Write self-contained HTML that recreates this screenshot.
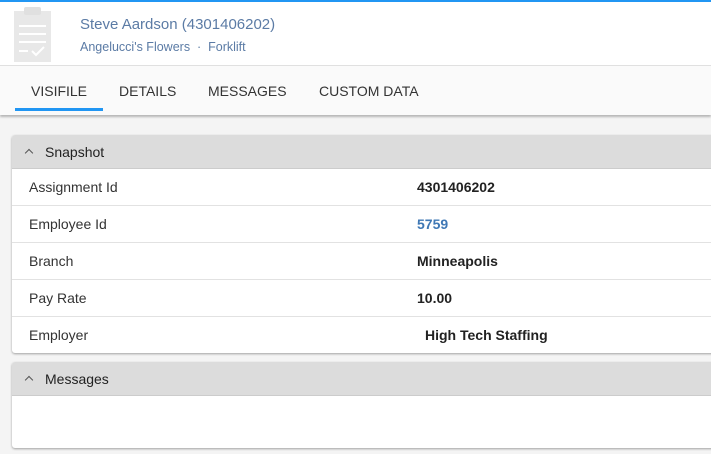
<!DOCTYPE html>
<html><head><style>
body{margin:0;width:711px;height:454px;overflow:hidden;background:#f4f4f4;font-family:"Liberation Sans",sans-serif;position:relative}
.top{position:absolute;left:0;top:0;width:711px;height:66px;background:#fff;border-top:2px solid #2196f3;box-sizing:border-box;border-bottom:1px solid #e0e0e0}
.name{position:absolute;left:80px;top:14px;font-size:15px;color:#5b7ba5}
.sub{position:absolute;left:80px;top:38px;font-size:12.5px;color:#5b7ba5}
.tabs{position:absolute;left:0;top:66px;width:711px;height:49px;background:#fafafa;box-shadow:0 2px 2px rgba(0,0,0,.25)}
.tab{position:absolute;top:17px;font-size:14px;color:#333}
.ul{position:absolute;left:15px;top:42px;width:88px;height:3px;background:#2196f3}
.card{position:absolute;left:12px;width:710px;background:#fff;border-radius:3px;box-shadow:0 1px 2px rgba(0,0,0,.35);overflow:hidden}
.hd{height:33px;background:#dcdcdc;border-bottom:1px solid #ccc;font-size:14px;color:#222;line-height:35px;padding-left:33px;position:relative}
.hd:before{content:"";position:absolute;left:14px;top:15px;width:5px;height:5px;border-left:1.5px solid #555;border-top:1.5px solid #555;transform:rotate(45deg)}
.row{height:36px;border-bottom:1px solid #e2e2e2;position:relative;font-size:14px;color:#333;line-height:36px}
.row:first-of-type{height:37px}
.row:last-child{border-bottom:none}
.row span{position:absolute;left:17px}
.row b{position:absolute;left:405px;font-weight:bold;color:#222;font-size:14px}
</style></head><body>
<div class="top">
<svg style="position:absolute;left:14px;top:5px" width="37" height="55" viewBox="0 0 37 55"><rect x="0" y="4" width="37" height="51" fill="#e8e8e8"/><rect x="10" y="0" width="17" height="8" rx="2" fill="#e0e0e0"/><g stroke="#fff" stroke-width="2"><line x1="5" y1="19" x2="32" y2="19"/><line x1="5" y1="27" x2="32" y2="27"/><line x1="5" y1="35" x2="32" y2="35"/><line x1="5" y1="44" x2="14" y2="44"/><polyline points="18,44 22,48 30,40" fill="none"/></g></svg>
<div class="name">Steve Aardson (4301406202)</div>
<div class="sub">Angelucci's Flowers &nbsp;·&nbsp; Forklift</div>
</div>
<div class="tabs">
<div class="tab" style="left:31px">VISIFILE</div>
<div class="tab" style="left:119px">DETAILS</div>
<div class="tab" style="left:208px">MESSAGES</div>
<div class="tab" style="left:319px">CUSTOM DATA</div>
<div class="ul"></div>
</div>
<div class="card" style="top:135px">
<div class="hd">Snapshot</div>
<div class="row"><span>Assignment Id</span><b>4301406202</b></div>
<div class="row"><span>Employee Id</span><b style="color:#3f78b5">5759</b></div>
<div class="row"><span>Branch</span><b>Minneapolis</b></div>
<div class="row"><span>Pay Rate</span><b>10.00</b></div>
<div class="row"><span>Employer</span><b style="left:413px">High Tech Staffing</b></div>
</div>
<div class="card" style="top:362px;height:86px">
<div class="hd">Messages</div>
</div>
</body></html>
